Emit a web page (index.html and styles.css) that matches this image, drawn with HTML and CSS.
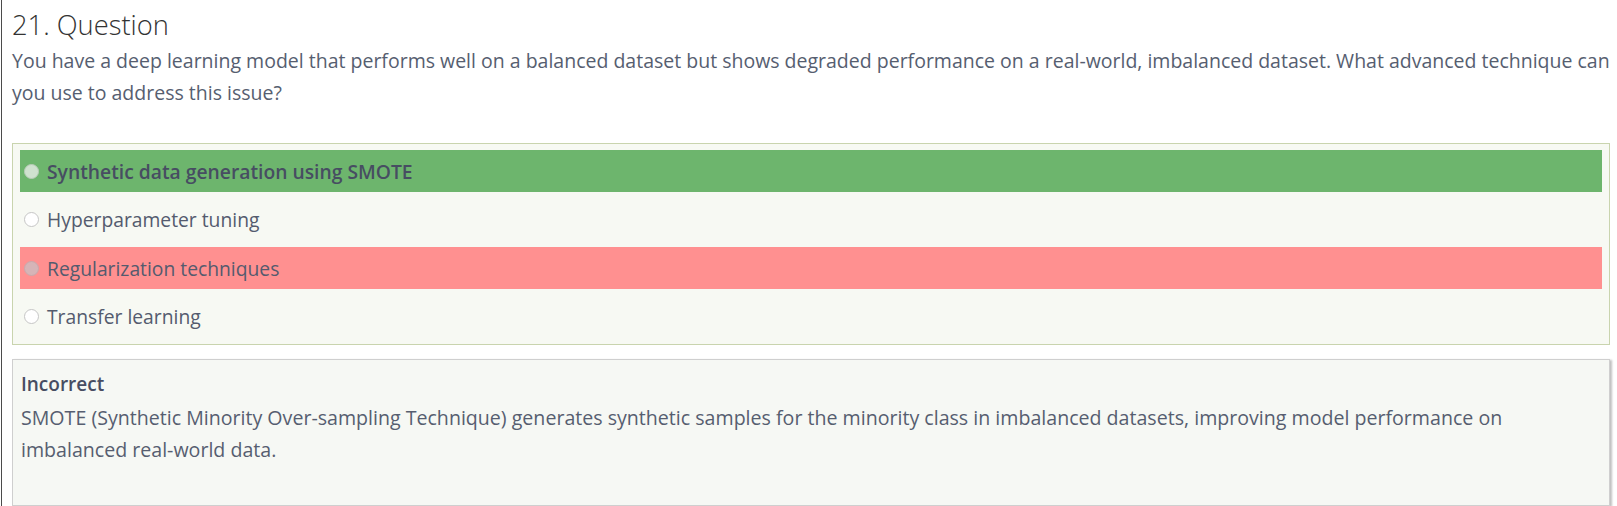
FILE: index.html
```html
<!DOCTYPE html>
<html lang="en">
<head>
    <meta charset="UTF-8">
    <meta name="viewport" content="width=device-width, initial-scale=1.0">
    <title>Question 21</title>
    <link rel="stylesheet" href="styles.css">
</head>
<body>
    <div class="panel">
        <h1 class="q-title">21. Question</h1>
        <p class="q-text">You have a deep learning model that performs well on a balanced dataset but shows degraded performance on a real-world, imbalanced dataset. What advanced technique can you use to address this issue?</p>

        <div class="answers">
            <label class="answer correct">
                <span class="radio"></span>
                <span class="answer-text">Synthetic data generation using SMOTE</span>
            </label>
            <label class="answer">
                <span class="radio"></span>
                <span class="answer-text">Hyperparameter tuning</span>
            </label>
            <label class="answer wrong">
                <span class="radio"></span>
                <span class="answer-text">Regularization techniques</span>
            </label>
            <label class="answer">
                <span class="radio"></span>
                <span class="answer-text">Transfer learning</span>
            </label>
        </div>

        <div class="feedback">
            <div class="feedback-title">Incorrect</div>
            <p class="feedback-text">SMOTE (Synthetic Minority Over-sampling Technique) generates synthetic samples for the minority class in imbalanced datasets, improving model performance on imbalanced real-world data.</p>
        </div>
    </div>
</body>
</html>
```

FILE: styles.css
```css
html, body {
    margin: 0;
    padding: 0;
    overflow: hidden;
}
body {
    font-family: 'Open Sans', 'DejaVu Sans', sans-serif;
    color: #565e70;
    background-color: #fff;
}
.panel {
    box-sizing: border-box;
    min-height: 100vh;
    margin-left: 1px;
    border-left: 1px solid #4b4b4b;
    padding: 8px 7px 0 10px;
}
.q-title {
    margin: 0;
    font-size: 27.3px;
    font-weight: 300;
    line-height: 34px;
    color: #333;
}
.q-text {
    margin: 3px 0 0;
    font-size: 19.5px;
    line-height: 32px;
}
.answers {
    display: flex;
    flex-direction: column;
    gap: 6.5px;
    margin-top: 34px;
    padding: 6px 7px;
    border: 1px solid #c9d4ae;
    background-color: #f7f9f3;
}
.answer {
    display: flex;
    align-items: center;
    gap: 8px;
    height: 42px;
    padding-left: 4px;
    font-size: 19.3px;
    color: #545b6e;
}
.answer.correct {
    background-color: #6db56d;
    font-weight: 600;
    color: #474d62;
}
.answer.wrong {
    background-color: #ff9090;
}
.radio {
    box-sizing: border-box;
    width: 15px;
    height: 15px;
    border-radius: 50%;
    border: 1px solid #c6c6c6;
    background-color: #fff;
}
.answer.correct .radio {
    border-color: #b9ccb9;
    background-color: #cfe2cf;
}
.answer.wrong .radio {
    border-color: #c9a9ac;
    background-color: #d6b4b7;
}
.feedback {
    box-sizing: border-box;
    min-height: 147px;
    margin-top: 14px;
    padding: 9px 8px 6px;
    border: 1px solid #cfcfcf;
    background-color: #f6f8f4;
    box-shadow: 2px 1px 2px rgba(0,0,0,0.25);
}
.feedback-title {
    font-size: 19px;
    font-weight: 600;
    line-height: 31px;
    color: #474d62;
}
.feedback-text {
    margin: 2px 0 0;
    font-size: 19.6px;
    line-height: 32px;
}
```
